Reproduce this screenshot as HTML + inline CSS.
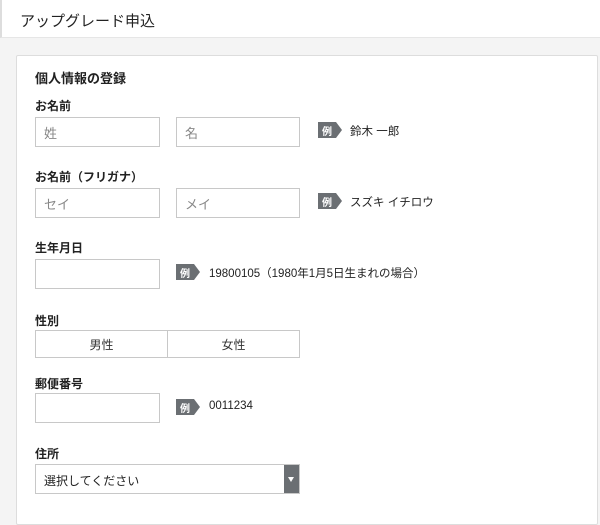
<!DOCTYPE html>
<html><head><meta charset="utf-8"><style>
*{box-sizing:border-box;margin:0;padding:0}
body{width:600px;height:509px;overflow:hidden;background:#f4f4f4;font-family:"Liberation Sans","Noto Sans CJK JP",sans-serif;color:#222;position:relative}
.hdr{position:absolute;left:0;top:0;width:600px;height:38px;background:#fff;border-bottom:1px solid #e6e6e6;border-left:2px solid #ddd}
.hdr span{position:absolute;left:18px;top:10px;font-size:15px}
.card{position:absolute;left:16px;top:55px;width:582px;height:470px;background:#fff;border:1px solid #ddd;border-radius:2px}
.a{position:absolute}
.lbl{font-size:12px;font-weight:bold}
.in{position:absolute;height:30px;border:1px solid #c8c8c8;background:#fff;font-size:13px;color:#888;padding:5px 0 0 8px}
.bd{position:absolute;width:24px;height:16px;background:#6b6f73;color:#fff;font-size:10px;font-weight:bold;padding:1px 0 0 4px;clip-path:polygon(0 0,18px 0,24px 8px,18px 16px,0 16px)}
.ex{position:absolute;font-size:11.5px}
</style></head><body>
<div class="hdr"><span>アップグレード申込</span></div>
<div class="card"></div>
<div class="a" style="left:35px;top:68px;font-size:13px;font-weight:bold">個人情報の登録</div>
<div class="a lbl" style="left:35px;top:97px">お名前</div>
<div class="in" style="left:35px;top:117px;width:125px">姓</div>
<div class="in" style="left:176px;top:117px;width:124px">名</div>
<div class="bd" style="left:318px;top:122px">例</div><div class="ex" style="left:350px;top:123px">鈴木 一郎</div>
<div class="a lbl" style="left:35px;top:168px">お名前（フリガナ）</div>
<div class="in" style="left:35px;top:188px;width:125px">セイ</div>
<div class="in" style="left:176px;top:188px;width:124px">メイ</div>
<div class="bd" style="left:318px;top:193px">例</div><div class="ex" style="left:350px;top:194px">スズキ イチロウ</div>
<div class="a lbl" style="left:35px;top:239px">生年月日</div>
<div class="in" style="left:35px;top:259px;width:125px"></div>
<div class="bd" style="left:176px;top:264px">例</div><div class="ex" style="left:209px;top:265px">19800105（1980年1月5日生まれの場合）</div>
<div class="a lbl" style="left:35px;top:312px">性別</div>
<div class="in" style="left:35px;top:330px;width:133px;height:28px;color:#333;font-size:12px;text-align:center;padding:5px 0 0">男性</div>
<div class="in" style="left:167px;top:330px;width:133px;height:28px;color:#333;font-size:12px;text-align:center;padding:5px 0 0">女性</div>
<div class="a lbl" style="left:35px;top:375px">郵便番号</div>
<div class="in" style="left:35px;top:393px;width:125px"></div>
<div class="bd" style="left:176px;top:399px">例</div><div class="ex" style="left:209px;top:400px">0011234</div>
<div class="a lbl" style="left:35px;top:445px">住所</div>
<div class="in" style="left:35px;top:464px;width:265px;color:#222;font-size:12px;padding-top:7px">選択してください</div>
<div class="a" style="left:284px;top:465px;width:15px;height:28px;background:#6b6f73"><div style="position:absolute;left:4px;top:12px;border-left:3.5px solid transparent;border-right:3.5px solid transparent;border-top:5px solid #fff"></div></div>
</body></html>
